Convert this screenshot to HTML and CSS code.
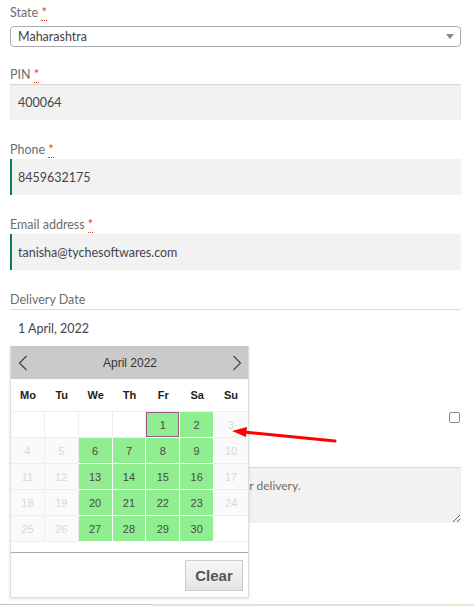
FILE: index.html
```html
<!DOCTYPE html>
<html lang="en">
<head>
<meta charset="utf-8">
<title>Checkout – Delivery Date</title>
<link rel="stylesheet" href="styles.css">
</head>
<body>
<form class="form">
  <div class="field field-first">
    <label class="label">State <abbr class="req" title="required">*</abbr></label>
    <div class="select">
      <span class="select-text">Maharashtra</span>
      <span class="select-arrow"></span>
    </div>
  </div>

  <div class="field field-second">
    <label class="label">PIN <abbr class="req" title="required">*</abbr></label>
    <div class="input">400064</div>
  </div>

  <div class="field">
    <label class="label">Phone <abbr class="req" title="required">*</abbr></label>
    <div class="input input-valid">8459632175</div>
  </div>

  <div class="field">
    <label class="label">Email address <abbr class="req" title="required">*</abbr></label>
    <div class="input input-valid">tanisha@tychesoftwares.com</div>
  </div>

  <div class="field field-date">
    <label class="label">Delivery Date</label>
    <div class="input input-date">1 April, 2022</div>

    <div class="datepicker">
      <div class="dp-header">
        <span class="dp-nav">
          <svg width="10" height="16" viewBox="0 0 10 16"><polyline points="8.5,1 1.5,8 8.5,15" fill="none" stroke="#444" stroke-width="1.2"/></svg>
        </span>
        <span class="dp-title">April 2022</span>
        <span class="dp-nav">
          <svg width="10" height="16" viewBox="0 0 10 16"><polyline points="1.5,1 8.5,8 1.5,15" fill="none" stroke="#444" stroke-width="1.2"/></svg>
        </span>
      </div>
      <div class="dp-days">
        <span>Mo</span><span>Tu</span><span>We</span><span>Th</span><span>Fr</span><span>Sa</span><span>Su</span>
      </div>
      <table class="dp-grid">
        <tr>
          <td class="empty"></td><td class="empty"></td><td class="empty"></td><td class="empty"></td>
          <td class="ok current">1</td><td class="ok">2</td><td class="off">3</td>
        </tr>
        <tr>
          <td class="off">4</td><td class="off">5</td><td class="ok">6</td><td class="ok">7</td>
          <td class="ok">8</td><td class="ok">9</td><td class="off">10</td>
        </tr>
        <tr>
          <td class="off">11</td><td class="off">12</td><td class="ok">13</td><td class="ok">14</td>
          <td class="ok">15</td><td class="ok">16</td><td class="off">17</td>
        </tr>
        <tr>
          <td class="off">18</td><td class="off">19</td><td class="ok">20</td><td class="ok">21</td>
          <td class="ok">22</td><td class="ok">23</td><td class="off">24</td>
        </tr>
        <tr>
          <td class="off">25</td><td class="off">26</td><td class="ok">27</td><td class="ok">28</td>
          <td class="ok">29</td><td class="ok">30</td><td class="empty"></td>
        </tr>
      </table>
      <div class="dp-buttons">
        <button type="button" class="dp-clear">Clear</button>
      </div>
    </div>
  </div>

  <div class="ship-row">
    <span class="checkbox"></span>
  </div>

  <textarea class="notes" placeholder="Notes about your order, e.g. special notes for delivery."></textarea>
</form>

<div class="bottom-strip">
  <span class="strip-a"></span><span class="strip-b"></span><span class="strip-c"></span><span class="strip-d"></span>
</div>

<svg class="annotation" width="474" height="606" viewBox="0 0 474 606">
  <line x1="335" y1="441" x2="244" y2="432" stroke="#f00" stroke-width="3" stroke-linecap="round"/>
  <polygon points="232,431 247,427 246,437" fill="#f00"/>
</svg>
</body>
</html>
```
FILE: styles.css
```css
html, body {
  margin: 0;
  padding: 0;
  background: #fff;
}

body {
  position: relative;
  width: 474px;
  height: 606px;
  overflow: hidden;
  font-family: Lato, "Noto Sans", sans-serif;
  color: #43454b;
}

.form {
  padding: 3px 13px 0 10px;
}

.field {
  margin-top: 20px;
}

.field-first {
  margin-top: 0;
}

.field-second {
  margin-top: 18px;
}

.label {
  display: block;
  font-size: 12.5px;
  line-height: 19px;
  color: #6d6d6d;
}

.req {
  color: #e2401c;
  text-decoration: none;
  border-bottom: 1px dotted #e2401c;
}

.select {
  margin-top: 4px;
  height: 21px;
  box-sizing: border-box;
  border: 1px solid #aaa;
  border-radius: 4px;
  display: flex;
  align-items: center;
  justify-content: space-between;
  padding: 0 6px 0 7px;
  font-size: 12.5px;
  color: #444;
}

.select-arrow {
  width: 0;
  height: 0;
  border-left: 4px solid transparent;
  border-right: 4px solid transparent;
  border-top: 5px solid #888;
}

.input {
  height: 36px;
  box-sizing: border-box;
  background: #f2f2f2;
  box-shadow: inset 0 1px 1px rgba(0, 0, 0, 0.125);
  padding: 0 8px;
  display: flex;
  align-items: center;
  font-size: 12.5px;
  color: #43454b;
}

.input-valid {
  box-shadow: inset 2px 0 0 #0f834d;
}

.field-date {
  position: relative;
}

.input-date {
  background: #fff;
  box-shadow: none;
  border-top: 1px solid #dcdcdc;
  height: 37px;
}

.datepicker {
  position: absolute;
  left: 0;
  top: 100%;
  width: 239px;
  box-sizing: border-box;
  border: 1px solid #ddd;
  border-top: none;
  background: #fff;
  box-shadow: 0 1px 3px rgba(0, 0, 0, 0.12);
  font-family: "Liberation Sans", Arial, sans-serif;
  z-index: 5;
}

.dp-header {
  height: 33px;
  background: #cacaca;
  display: flex;
  align-items: center;
  justify-content: space-between;
  padding: 0 6px 0 7px;
}

.dp-nav {
  display: flex;
  width: 10px;
}

.dp-title {
  font-size: 12px;
  color: #333;
}

.dp-days {
  height: 32px;
  display: grid;
  grid-template-columns: repeat(7, 1fr);
  align-items: center;
  text-align: center;
  font-size: 11px;
  font-weight: bold;
  color: #222;
}

.dp-grid {
  width: 100%;
  table-layout: fixed;
  border-collapse: separate;
  border-spacing: 0;
  border-top: 1px solid #eee;
}

.dp-grid td {
  height: 25px;
  padding: 0;
  text-align: center;
  font-size: 11px;
  border-right: 1px solid #eee;
  border-bottom: 1px solid #eee;
}

.dp-grid td:last-child {
  border-right: none;
}

.dp-grid td.empty {
  background: #fff;
}

.dp-grid td.off {
  background: #fafafa;
  color: #d8d8d8;
}

.dp-grid td.ok {
  background: #90ee90;
  color: #4a4a4a;
  border-color: #fff;
}

.dp-grid td.current {
  box-shadow: inset 0 0 0 1px #96588a;
}

.dp-buttons {
  margin-top: 10px;
  border-top: 1px solid #aaa;
  padding: 7px 5px 6px;
  display: flex;
  justify-content: flex-end;
}

.dp-clear {
  width: 58px;
  height: 31px;
  border: 1px solid #ccc;
  background: linear-gradient(#f6f6f6 0%, #eeeeee 55%, #e2e2e2 100%);
  font-family: "Liberation Sans", Arial, sans-serif;
  font-size: 15px;
  font-weight: bold;
  color: #555;
  padding: 0;
}

.ship-row {
  display: flex;
  justify-content: flex-end;
  padding-top: 66px;
  padding-right: 1px;
}

.checkbox {
  width: 9px;
  height: 9px;
  border: 1px solid #8a8a8a;
  border-radius: 2px;
  background: #fff;
}

.notes {
  display: block;
  margin-top: 44px;
  width: 100%;
  height: 56px;
  box-sizing: border-box;
  border: none;
  background: #f2f2f2;
  box-shadow: inset 0 1px 1px rgba(0, 0, 0, 0.125);
  padding: 9px 8px;
  font-family: Lato, "Noto Sans", sans-serif;
  font-size: 12px;
  line-height: 19px;
  color: #43454b;
}

.notes::placeholder {
  color: #6d6d6d;
}

.bottom-strip {
  position: absolute;
  left: 0;
  bottom: 0;
  width: 474px;
  height: 2px;
  display: flex;
}

.strip-a {
  width: 152px;
  border-top: 1px solid #c4c4c4;
  background: #fff;
}

.strip-b {
  width: 248px;
  background: #dfe2df;
}

.strip-c {
  width: 44px;
  background: #e6e8dc;
}

.strip-d {
  flex: 1;
  background: #ecebcf;
}

.annotation {
  position: absolute;
  left: 0;
  top: 0;
  pointer-events: none;
  z-index: 10;
}
```
